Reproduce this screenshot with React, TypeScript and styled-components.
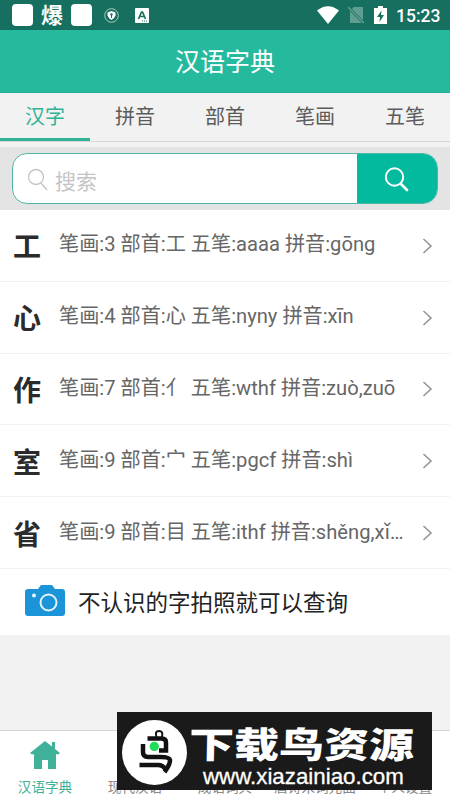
import React from 'react';
import styled, { createGlobalStyle } from 'styled-components';

const Global = createGlobalStyle`
  * { box-sizing: border-box; }
  body {
    margin: 0;
    background: #f2f2f2;
    font-family: Roboto, "Noto Sans CJK SC", sans-serif;
  }
`;

const Screen = styled.div`
  position: relative;
  display: flex;
  flex-direction: column;
  width: 450px;
  height: 800px;
  overflow: hidden;
  background: #f2f2f2;
`;

const StatusBar = styled.div`
  display: flex;
  align-items: center;
  justify-content: space-between;
  height: 30px;
  padding: 0 10px 0 12px;
  background: #17705f;
  color: #fff;
`;

const StatusGroup = styled.div<{ $gap: number }>`
  display: flex;
  align-items: center;
  gap: ${(p) => p.$gap}px;
`;

const AppSquare = styled.span`
  width: 21px;
  height: 22px;
  border-radius: 4px;
  background: #fff;
`;

const StatusGlyph = styled.span`
  width: 22px;
  margin: 0 8px;
  padding-top: 2px;
  font-size: 22px;
  line-height: 28px;
  font-weight: 700;
`;

const NoticeIcon = styled.svg<{ $gap: number }>`
  height: 15px;
  margin-left: ${(p) => p.$gap}px;
`;

const Clock = styled.span`
  width: 44px;
  padding-top: 2px;
  font-size: 17.5px;
  line-height: 28px;
  font-weight: 500;
  white-space: nowrap;
`;

const Header = styled.h1`
  height: 63px;
  margin: 0;
  padding-top: 1px;
  border-bottom: 1px solid #22ae92;
  background: #25ba9d;
  color: #fff;
  font-size: 25px;
  line-height: 64px;
  font-weight: 400;
  text-align: center;
`;

const Tabs = styled.nav`
  display: grid;
  grid-template-columns: repeat(5, 1fr);
  height: 49px;
  border-bottom: 1px solid #d6d6d6;
`;

const Tab = styled.a<{ $active?: boolean }>`
  height: 48px;
  border-bottom: 3px solid ${(p) => (p.$active ? '#2fb295' : 'transparent')};
  color: ${(p) => (p.$active ? '#2fb295' : '#5c5c5c')};
  font-size: 20px;
  line-height: 48px;
  text-align: center;
`;

const SearchBar = styled.div`
  height: 63px;
  margin-top: 5px;
  padding: 6px 12px 6px;
  background: #e4e4e4;
`;

const SearchBox = styled.div`
  display: flex;
  height: 51px;
  border: 1.5px solid #4fb8a4;
  border-radius: 15px;
  background: #fff;
  overflow: hidden;
`;

const SearchField = styled.div`
  display: flex;
  flex: 1;
  align-items: center;
  gap: 6px;
  padding: 2px 0 0 14px;
  color: #c4c4c4;
  font-size: 21px;
`;

const SearchButton = styled.button`
  display: flex;
  align-items: center;
  justify-content: center;
  width: 81px;
  margin: -1px;
  padding: 1px 2px 0 0;
  border: 0;
  background: #03b99e;
`;

const List = styled.div`
  display: flex;
  flex-direction: column;
  background: #fff;
`;

const Row = styled.div`
  display: flex;
  align-items: center;
  height: 71.8px;
  padding: 1px 17px 0 13px;
  border-bottom: 1px solid #f3f3f3;
`;

const Character = styled.span`
  width: 46px;
  padding-top: 5px;
  color: #2b2b2b;
  font-size: 28px;
  line-height: 40px;
  font-weight: 700;
`;

const Detail = styled.span`
  width: 348px;
  padding-bottom: 3px;
  overflow: hidden;
  color: #666;
  font-size: 20.17px;
  line-height: 32px;
  text-overflow: ellipsis;
  white-space: nowrap;
`;

const Chevron = styled.svg`
  width: 11px;
  height: 18px;
  margin-left: auto;
`;

const PhotoRow = styled.div`
  display: flex;
  align-items: center;
  gap: 13px;
  height: 66px;
  padding: 0 0 3px 25px;
  color: #222;
  font-size: 22.5px;
`;

const PhotoLabel = styled.span`
  padding-top: 2px;
`;

const BottomNav = styled.nav`
  display: grid;
  grid-template-columns: repeat(5, 90px);
  height: 70px;
  margin-top: auto;
  border-top: 1px solid #d4d4d4;
  background: #fff;
`;

const NavItem = styled.a<{ $active?: boolean }>`
  display: flex;
  flex-direction: column;
  align-items: center;
  justify-content: flex-end;
  gap: 8px;
  padding-bottom: 3px;
  color: ${(p) => (p.$active ? '#3fb198' : '#888')};
  font-size: 13.6px;
  line-height: 20px;
  white-space: nowrap;
`;

const Banner = styled.div`
  position: absolute;
  left: 117px;
  top: 712px;
  display: flex;
  width: 315px;
  height: 78px;
  padding: 8px 0 0 5px;
  gap: 2px;
  background: #1a1a1a;
  color: #fff;
`;

const BannerText = styled.div`
  display: flex;
  flex-direction: column;
  width: 236px;
`;

const BannerTitle = styled.span`
  height: 46px;
  font-family: "Noto Sans CJK SC", sans-serif;
  font-size: 45px;
  line-height: 48px;
  font-weight: 900;
  white-space: nowrap;
  transform: translateY(-1px) scaleY(0.8) skewX(-1deg);
`;

const BannerUrl = styled.span`
  margin-top: -1px;
  padding-left: 14px;
  font-family: "Liberation Sans", sans-serif;
  font-size: 22.3px;
  line-height: 24px;
  -webkit-text-stroke: 0.3px #fff;
  white-space: nowrap;
`;

const entries = [
  { char: '工', detail: '笔画:3 部首:工 五笔:aaaa 拼音:gōng' },
  { char: '心', detail: '笔画:4 部首:心 五笔:nyny 拼音:xīn' },
  { char: '作', detail: '笔画:7 部首:亻 五笔:wthf 拼音:zuò,zuō' },
  { char: '室', detail: '笔画:9 部首:宀 五笔:pgcf 拼音:shì' },
  { char: '省', detail: '笔画:9 部首:目 五笔:ithf 拼音:shěng,xǐng' },
];

const StatusIcons = () => (
  <>
    <svg width="22" height="20" viewBox="0 0 22 20">
      <path d="M0 5.500Q11-3 22 5.500L11 19Z" fill="#fff" />
    </svg>
    <svg width="17" height="18" viewBox="0 0 17 18">
      <path d="M5.500 1H15v13L4 3ZM2 5v12h12Z" fill="#619e92" />
      <path d="M0 1l16 16" stroke="#619e92" strokeWidth="1.500" />
    </svg>
    <svg width="13" height="19" viewBox="0 0 13 19">
      <path d="M4 0h5v2h4v16H0V2h4Z" fill="#fff" />
      <path d="M7.500 4.500L3 11h3l-.5 5L10 9H7Z" fill="#17705f" />
    </svg>
  </>
);

const Magnifier = () => (
  <svg width="22" height="23" viewBox="0 0 22 23" fill="none" stroke="#c4c4c4" strokeWidth="1.300">
    <circle cx="9" cy="9" r="7.500" />
    <path d="M14 15l6 7" />
  </svg>
);

export default function App() {
  return (
    <>
      <Global />
      <Screen>
        <StatusBar>
          <StatusGroup $gap={0}>
            <AppSquare />
            <StatusGlyph>爆</StatusGlyph>
            <AppSquare />
            <NoticeIcon $gap={12} width="15" viewBox="0 0 15 15">
              <circle cx="7.500" cy="7.500" r="6.800" fill="none" stroke="#a4cac2" />
              <path d="M7.500 3l4 1.500v3q-1 3-4 4.500-3-1.500-4-4.500v-3Z" fill="#fff" />
              <path d="M7.500 7v3" stroke="#17705f" />
              <circle cx="7.500" cy="6.500" r="1.200" fill="#17705f" />
            </NoticeIcon>
            <NoticeIcon $gap={16} width="14" viewBox="0 0 14 15">
              <rect width="14" height="15" rx="1" fill="#fff" />
              <path d="M3.500 11L6.500 4h1l3 7M4.800 8.500h4.500" fill="none" stroke="#17705f" strokeWidth="1.700" />
              <path d="M7 13h5" stroke="#17705f" strokeDasharray="1 1" />
            </NoticeIcon>
          </StatusGroup>
          <StatusGroup $gap={9}>
            <StatusIcons />
            <Clock>15:23</Clock>
          </StatusGroup>
        </StatusBar>
        <Header>汉语字典</Header>
        <Tabs>
          <Tab $active>汉字</Tab>
          <Tab>拼音</Tab>
          <Tab>部首</Tab>
          <Tab>笔画</Tab>
          <Tab>五笔</Tab>
        </Tabs>
        <SearchBar>
          <SearchBox>
            <SearchField>
              <Magnifier />
              搜索
            </SearchField>
            <SearchButton aria-label="搜索">
              <svg width="25" height="25" viewBox="0 0 25 25" fill="none" stroke="#fff" strokeLinecap="round">
                <circle cx="10.500" cy="10" r="8.700" strokeWidth="2" />
                <path d="M17 17l6 6" strokeWidth="2.700" />
              </svg>
            </SearchButton>
          </SearchBox>
        </SearchBar>
        <List>
          {entries.map((entry) => (
            <Row key={entry.char}>
              <Character>{entry.char}</Character>
              <Detail>{entry.detail}</Detail>
              <Chevron viewBox="0 0 11 18" fill="none" stroke="#999" strokeWidth="1.700">
                <path d="M1.500 2l7.500 7-7.500 7" />
              </Chevron>
            </Row>
          ))}
          <PhotoRow>
            <svg width="40" height="31" viewBox="0 0 40 31">
              <path
                d="M3 4h10l3-4h11l3 4h7q3 0 3 3v21q0 3-3 3H3q-3 0-3-3V7q0-3 3-3Z"
                fill="#1b94d8"
              />
              <circle cx="23.500" cy="17.500" r="8" fill="none" stroke="#e2f5ff" strokeWidth="2" />
              <circle cx="9" cy="10.500" r="2" fill="#e2f5ff" />
            </svg>
            <PhotoLabel>不认识的字拍照就可以查询</PhotoLabel>
          </PhotoRow>
        </List>
        <BottomNav>
          <NavItem $active>
            <svg width="30" height="28" viewBox="0 0 30 28">
              <path d="M0 12L15 0l7 5.500V1h3v7l5 4-2 1.500-2-.5v15h-8v-9h-6v9H4V13l-2 .5Z" fill="#3fb198" />
            </svg>
            汉语字典
          </NavItem>
          <NavItem>现代汉语</NavItem>
          <NavItem>成语词典</NavItem>
          <NavItem>唐诗宋词元曲</NavItem>
          <NavItem>个人设置</NavItem>
        </BottomNav>
        <Banner>
          <svg width="65" height="65" viewBox="0 0 65 65">
            <circle cx="32.500" cy="32.500" r="32.500" fill="#fff" />
            <g fill="none" stroke="#111" strokeWidth="4.500">
              <path d="M25.500 18.500h14q4.500 0 4.500 4v8h-7" />
              <path d="M21 24v8q0 5 5 5h13q8 0 9 3 0 5-5.500 12" />
              <path d="M17.500 45h19q4 0 7 4" />
              <path d="M34.500 17q-2-6 2.500-6 4.500 0 3 6" strokeWidth="2" />
            </g>
            <circle cx="32.300" cy="26.500" r="4.700" fill="#20dc58" />
          </svg>
          <BannerText>
            <BannerTitle>下载鸟资源</BannerTitle>
            <BannerUrl>www.xiazainiao.com</BannerUrl>
          </BannerText>
        </Banner>
      </Screen>
    </>
  );
}
